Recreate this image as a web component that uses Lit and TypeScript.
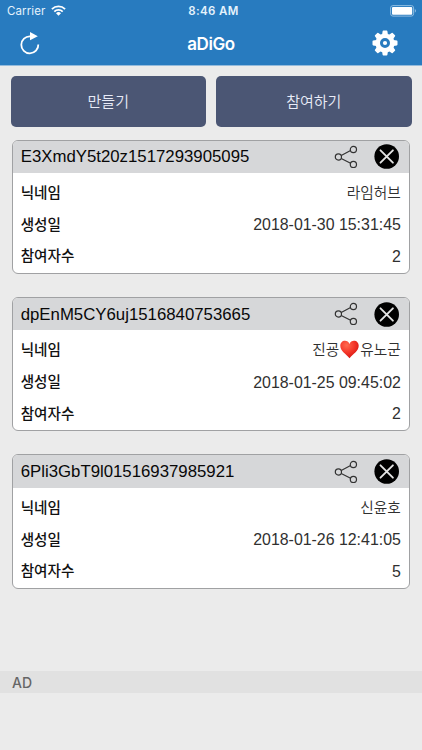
import { LitElement, html, css, svg } from "lit";
import { customElement, property } from "lit/decorators.js";

interface Room {
  code: string;
  nickname: string[];
  created: string;
  members: number;
}

const ROOMS: Room[] = [
  { code: "E3XmdY5t20z1517293905095", nickname: ["라임허브"], created: "2018-01-30 15:31:45", members: 2 },
  { code: "dpEnM5CY6uj1516840753665", nickname: ["진굥", "유노군"], created: "2018-01-25 09:45:02", members: 2 },
  { code: "6Pli3GbT9l01516937985921", nickname: ["신윤호"], created: "2018-01-26 12:41:05", members: 5 },
];

const heart = html`<svg class="heart" width="19" height="19" viewBox="0 0 19 19">
  <defs>
    <radialGradient id="red" cx="35%" cy="25%" r="80%">
      <stop offset="0" stop-color="#ff6a50" />
      <stop offset="0.5" stop-color="#f5392b" />
      <stop offset="1" stop-color="#d3120f" />
    </radialGradient>
  </defs>
  <path fill="url(#red)" d="M9.5 4C8.7 1.9 7 .8 5 .8 2.300.8.3 2.900.3 5.800.3 11 5.500 13.600 9.500 18.300 13.500 13.600 18.700 11 18.700 5.800 18.700 2.900 16.700.8 14 .8 12 .8 10.300 1.900 9.500 4Z" />
</svg>`;

@customElement("status-bar")
class StatusBar extends LitElement {
  static styles = css`
    :host {
      display: grid;
      grid-template-columns: 1fr auto 1fr;
      align-items: center;
      height: 22px;
      padding: 0 5px 0 7px;
      font-size: 11.5px;
      color: #e4f2fc;
    }
    .left { display: flex; align-items: center; gap: 6px; letter-spacing: 0.1px; }
    .left svg { margin-top: -1px; }
    .time { font-weight: 600; letter-spacing: 0.35px; padding-left: 3px; }
    .battery { justify-self: end; margin-top: -1px; }
    svg { display: block; }
  `;
  render() {
    return html`
      <span class="left">Carrier
        <svg width="15" height="11" viewBox="0 0 15 11" fill="none" stroke="#fff" stroke-width="1.8">
          <path d="M.9 4.200a9.300 9.300 0 0 1 13.200 0M3.300 6.700a5.900 5.900 0 0 1 8.400 0" />
          <path d="M7.500 10.700 5 8.200a3.500 3.500 0 0 1 5 0Z" fill="#fff" stroke="none" />
        </svg>
      </span>
      <span class="time">8:46 AM</span>
      <svg class="battery" width="27" height="12" viewBox="0 0 27 12">
        <rect x=".6" y=".6" width="23" height="10.500" rx="2.300" fill="none" stroke="#8fbde2" stroke-width="1" />
        <rect x="2" y="2" width="20.200" height="7.700" rx="1" fill="#fff" />
        <path d="M24.800 4.100c1.600.6 1.600 3 0 3.600Z" fill="#8fbde2" />
      </svg>
    `;
  }
}

@customElement("nav-bar")
class NavBar extends LitElement {
  static styles = css`
    :host {
      display: grid;
      grid-template-columns: 1fr auto 1fr;
      align-items: center;
      height: 43px;
      padding: 0 24px 0 20px;
      color: #fff;
    }
    .title { font-size: 17px; font-weight: 600; letter-spacing: -0.4px; padding-left: 4px; }
    .gear { justify-self: end; margin-top: -2px; }
    svg { display: block; }
    .reload { margin-top: -1px; }
  `;
  render() {
    const teeth = [0, 45, 90, 135, 180, 225, 270, 315];
    return html`
      <svg class="reload" width="20" height="24" viewBox="0 0 20 24">
        <path d="M10.200 5.400A8.500 8.500 0 1 0 18.300 13.500" fill="none" stroke="#fff" stroke-width="1.800" />
        <path d="M10 .9 17.800 5.300 10 9.300Z" fill="#fff" />
      </svg>
      <span class="title">aDiGo</span>
      <svg class="gear" width="26" height="26" viewBox="-13 -13 26 26">
        <circle r="7.300" fill="none" stroke="#fff" stroke-width="4.600" />
        ${teeth.map((a) => svg`<path transform="rotate(${a})" fill="#fff" d="M-2.900 -8.600-2.400-11.800Q-2.300-12.500-1.600-12.500H1.600Q2.300-12.500 2.400-11.800L2.900-8.600Z" />`)}
        <circle r="2.100" fill="#fff" />
      </svg>
    `;
  }
}

@customElement("room-card")
class RoomCard extends LitElement {
  @property({ attribute: false }) room!: Room;

  static styles = css`
    :host {
      display: block;
      box-sizing: border-box;
      height: 134.300px;
      border: 1px solid #a0a1a3;
      border-radius: 6px;
      overflow: hidden;
      background: #fff;
    }
    .head {
      display: flex;
      align-items: center;
      height: 32.500px;
      padding: 0 10px 0 8px;
      background: #d6d7d9;
    }
    .code { flex: 1; font-size: 16.800px; color: #080808; padding-top: 1px; }
    .share { margin-right: 16px; }
    svg { display: block; }
    .rows { padding-top: 3px; }
    .row {
      display: flex;
      align-items: center;
      justify-content: space-between;
      height: 31.800px;
      padding: 0 8.500px 0 8px;
    }
    .label { font-size: 14.600px; font-weight: 500; color: #111; margin-top: -1px; }
    .value { display: flex; align-items: center; font-size: 15.900px; font-weight: 300; color: #303030; padding-top: 3px; }
    .name { font-size: 14.700px; font-weight: 350; padding-top: 0; margin-top: -1px; }
    .heart { margin: 1px 1px 0; }
  `;

  render() {
    const { code, nickname, created, members } = this.room;
    return html`
      <div class="head">
        <span class="code">${code}</span>
        <svg class="share" width="24" height="24" viewBox="0 0 24 24" fill="none" stroke="#333" stroke-width="1.200">
          <path d="M7.200 10.500 16.600 5.500M7.200 13.500 16.600 18.300" />
          <circle cx="4.400" cy="12" r="3.100" />
          <circle cx="19.400" cy="4.500" r="3.100" />
          <circle cx="19.400" cy="19.400" r="3.100" />
        </svg>
        <svg width="25" height="25" viewBox="0 0 25 25">
          <circle cx="12.700" cy="12.500" r="12.300" fill="#000" />
          <path d="M6.500 6.300 18.900 18.700M18.900 6.300 6.500 18.700" stroke="#e2e2e2" stroke-width="1.900" stroke-linecap="round" />
        </svg>
      </div>
      <div class="rows">
        <div class="row">
          <span class="label">닉네임</span>
          <span class="value name">${nickname.map((part, i) => html`${i ? heart : ""}<span>${part}</span>`)}</span>
        </div>
        <div class="row"><span class="label">생성일</span><span class="value">${created}</span></div>
        <div class="row"><span class="label">참여자수</span><span class="value">${members}</span></div>
      </div>
    `;
  }
}

@customElement("app-root")
class AppRoot extends LitElement {
  static styles = css`
    :host {
      display: flex;
      flex-direction: column;
      box-sizing: border-box;
      height: 750px;
      background: #ebebeb;
      font-family: "Liberation Sans", "Noto Sans CJK KR", sans-serif;
    }
    .top {
      flex: none;
      height: 65px;
      background: #287bbf;
      border-bottom: 1px solid #94bbdc;
      font-family: Inter, "Liberation Sans", sans-serif;
    }
    .actions { display: grid; grid-template-columns: 1fr 1fr; gap: 10px; padding: 9.500px 10.500px 13px; }
    button {
      height: 51px;
      padding: 0 0 2px;
      border: 0;
      border-radius: 5px;
      background: #4b5674;
      color: #e8ebf7;
      font: 350 15px "Noto Sans CJK KR", sans-serif;
    }
    .list { flex: 1; display: flex; flex-direction: column; gap: 23.200px; padding: 0 11.700px; }
    .ad {
      height: 22px;
      line-height: 23px;
      padding-left: 12px;
      background: #e1e1e1;
      color: #666;
      font-family: Inter, "Liberation Sans", sans-serif;
      font-size: 14px;
      font-weight: 500;
    }
    .banner { height: 57px; }
  `;

  render() {
    return html`
      <header class="top"><status-bar></status-bar><nav-bar></nav-bar></header>
      <div class="actions"><button>만들기</button><button>참여하기</button></div>
      <main class="list">${ROOMS.map((room) => html`<room-card .room=${room}></room-card>`)}</main>
      <div class="ad">AD</div>
      <div class="banner"></div>
    `;
  }
}
